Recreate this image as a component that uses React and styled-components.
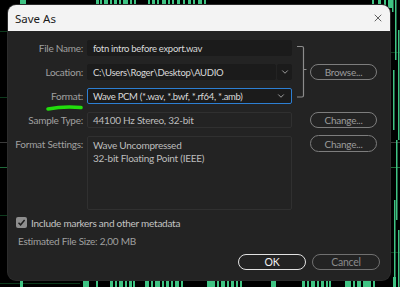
import React from 'react'
import styled, { createGlobalStyle } from 'styled-components'
import { ChevronDown, X } from 'lucide-react'

const GlobalStyle = createGlobalStyle`
  html, body { margin: 0; padding: 0; background: #000; }
  body { font-family: Lato, "Open Sans", sans-serif; }
`

const topBars = [
  [20, 6], [96, 3], [100, 2], [104, 4], [110, 2], [114, 3], [119, 2], [123, 5], [130, 2], [134, 2],
  [148, 2], [152, 3], [157, 2], [162, 4], [168, 2], [172, 2], [177, 3], [183, 2], [188, 3],
  [193, 2], [198, 4], [204, 2], [372, 2], [378, 3], [384, 2], [388, 4],
]

const bottomBars = [
  [20, 3], [83, 6], [96, 2], [110, 3], [115, 2], [119, 4], [125, 2], [129, 3], [133, 2],
  [145, 4], [151, 2], [155, 5], [162, 2], [166, 3], [171, 2], [175, 4], [181, 2],
  [207, 8], [217, 2], [221, 4], [227, 2], [231, 3], [236, 2], [240, 2],
  [271, 5], [302, 3], [307, 2], [311, 4], [317, 2], [321, 3], [326, 2], [329, 2],
  [345, 6], [353, 2], [357, 4], [363, 8], [373, 2], [393, 3],
]

const sideBars = [
  [392, 0, 12], [395, 0, 60], [398, 30, 110], [393, 70, 60], [396, 140, 80], [394, 200, 87], [398, 230, 57],
]

const gridLines = [
  [0, 8, 31, '#0d3b1d'], [0, 8, 97, '#0d3b1d'], [0, 8, 142, '#3a3a3a'], [0, 8, 167, '#1f6a3a'],
  [0, 8, 215, '#0d3b1d'], [0, 80, 283, '#0d3b1d'], [390, 400, 52, '#0d3b1d'], [390, 400, 142, '#3a3a3a'],
  [390, 400, 167, '#1f6a3a'], [390, 400, 252, '#0d3b1d'],
]

function Waveform() {
  return (
    <WaveSvg width="400" height="287" viewBox="0 0 400 287">
      {gridLines.map(([x1, x2, y, c], i) => (
        <line key={'g' + i} x1={x1} x2={x2} y1={y + 0.5} y2={y + 0.5} stroke={c} strokeWidth="1" />
      ))}
      {topBars.map(([x, w], i) => (
        <rect key={'t' + i} x={x} y="0" width={w} height="8" fill="#3fc383" />
      ))}
      {bottomBars.map(([x, w], i) => (
        <rect key={'b' + i} x={x} y="277" width={w} height="10" fill="#3fc383" />
      ))}
      {sideBars.map(([x, y, h], i) => (
        <rect key={'s' + i} x={x} y={y} width="1.5" height={h} fill="#3fc383" />
      ))}
    </WaveSvg>
  )
}

function App() {
  return (
    <Screen>
      <GlobalStyle />
      <Waveform />
      <Dialog>
        <TitleBar>
          <span>Save As</span>
          <CloseButton><X size={12} strokeWidth={1.4} /></CloseButton>
        </TitleBar>
        <Body>
          <Form>
            <Label>File Name:</Label>
            <Input>fotn intro before export.wav</Input>

            <Bracket>
              <svg width="18" height="64" viewBox="0 0 18 64">
                <path d="M5 6.5 H10 Q11.5 6.5 11.5 8 V55.5 Q11.5 57 10 57 H5 M11.5 29.5 H14.5" fill="none" stroke="#8c8c8c" strokeWidth="1.2" />
              </svg>
            </Bracket>

            <Label>Location:</Label>
            <Combo>
              <Input $grow>C:\Users\Roger\Desktop\AUDIO</Input>
              <DropButton><ChevronDown size={10} strokeWidth={1.8} /></DropButton>
            </Combo>
            <PillButton $row={2}>Browse...</PillButton>

            <Label>
              Format:
              <Underline width="40" height="8" viewBox="0 0 40 8">
                <path d="M3 5 Q18 2 36 3.5" fill="none" stroke="#22dd0c" strokeWidth="3.6" strokeLinecap="round" />
              </Underline>
            </Label>
            <Input $focus>
              <span>Wave PCM (*.wav, *.bwf, *.rf64, *.amb)</span>
              <ChevronDown size={10} strokeWidth={1.8} color="#c8c8c8" />
            </Input>

            <Label>Sample Type:</Label>
            <ReadOnly>44100 Hz Stereo, 32-bit</ReadOnly>
            <PillButton $row={4}>Change...</PillButton>

            <Label $top>Format Settings:</Label>
            <ReadOnly $multi>
              Wave Uncompressed
              <br />
              32-bit Floating Point (IEEE)
            </ReadOnly>
            <PillButton $row={5} $start>Change...</PillButton>
          </Form>

          <CheckRow>
            <CheckBox>
              <svg width="9" height="9" viewBox="0 0 9 9">
                <path d="M1.5 4.8 L3.6 6.8 L7.6 2" fill="none" stroke="#1e1e1e" strokeWidth="1.5" />
              </svg>
            </CheckBox>
            <CheckText>Include markers and other metadata</CheckText>
          </CheckRow>

          <SizeText>Estimated File Size: 2,00 MB</SizeText>

          <Footer>
            <FooterButton $primary>OK</FooterButton>
            <FooterButton>Cancel</FooterButton>
          </Footer>
        </Body>
      </Dialog>
    </Screen>
  )
}

export default App

const Screen = styled.div`
  position: relative;
  width: 400px;
  height: 287px;
  overflow: hidden;
  background: #000;
  padding: 5px 0 0 8px;
  box-sizing: border-box;
`

const WaveSvg = styled.svg`
  position: absolute;
  left: 0;
  top: 0;
`

const Dialog = styled.div`
  position: relative;
  width: 382px;
  height: 275px;
  border-radius: 8px;
  overflow: hidden;
  background: #232323;
  display: flex;
  flex-direction: column;
  box-shadow: 0 0 0 1px #2c2c2c;
`

const TitleBar = styled.div`
  height: 26px;
  flex: none;
  background: #f3f3f3;
  display: flex;
  align-items: center;
  justify-content: space-between;
  padding: 0 5px 0 7px;
  font-family: "Noto Sans", sans-serif;
  font-size: 11.5px;
  color: #1b1b1b;
`

const CloseButton = styled.div`
  width: 14px;
  height: 14px;
  display: flex;
  align-items: center;
  justify-content: center;
  color: #222;
`

const Body = styled.div`
  flex: 1;
  display: flex;
  flex-direction: column;
  padding-top: 9px;
  font-size: 10px;
  letter-spacing: -0.25px;
`

const Form = styled.div`
  display: grid;
  grid-template-columns: 79px 205px 18px 67px;
  grid-template-rows: 16px 16px 16px 16px 74px;
  row-gap: 8px;
`

const Label = styled.div`
  position: relative;
  grid-column: 1;
  padding-right: 4px;
  text-align: right;
  color: #a0a0a0;
  line-height: ${p => (p.$top ? '14px' : '16px')};
  padding-top: ${p => (p.$top ? '1px' : '0')};
  white-space: nowrap;
`

const Underline = styled.svg`
  position: absolute;
  left: 37px;
  top: 16px;
`

const Input = styled.div`
  ${p => (p.$grow ? 'flex: 1;' : 'grid-column: 2;')}
  box-sizing: border-box;
  height: 16px;
  display: flex;
  align-items: center;
  justify-content: space-between;
  padding: 0 5px 0 5px;
  background: #1b1b1b;
  border: 1px solid ${p => (p.$focus ? '#2d7fd3' : '#1b1b1b')};
  border-radius: 2px;
  color: #d9d9d9;
  font-size: 9.5px;
  letter-spacing: -0.3px;
  white-space: nowrap;
  overflow: hidden;
`

const Combo = styled.div`
  grid-column: 2;
  display: flex;
  gap: 1px;
`

const DropButton = styled.div`
  width: 15px;
  height: 16px;
  display: flex;
  align-items: center;
  justify-content: center;
  background: #1b1b1b;
  border-radius: 2px;
  color: #c8c8c8;
`

const Bracket = styled.div`
  grid-column: 3;
  grid-row: 1 / span 3;
`

const ReadOnly = styled.div`
  grid-column: 2;
  box-sizing: border-box;
  border: 1px solid #303030;
  border-radius: 2px;
  padding: ${p => (p.$multi ? '2px 5px' : '0 5px')};
  line-height: ${p => (p.$multi ? '13px' : '14px')};
  color: #bdbdbd;
  white-space: nowrap;
`

const PillButton = styled.div`
  grid-column: 4;
  grid-row: ${p => p.$row};
  align-self: ${p => (p.$start ? 'start' : 'stretch')};
  box-sizing: border-box;
  height: ${p => (p.$start ? '17px' : 'auto')};
  margin-top: ${p => (p.$start ? '-1px' : '0')};
  display: flex;
  align-items: center;
  justify-content: center;
  border: 1.5px solid #7d7d7d;
  border-radius: 9px;
  color: #9c9c9c;
`

const CheckRow = styled.div`
  display: flex;
  align-items: center;
  gap: 4px;
  margin-top: 7px;
  padding-left: 8px;
  height: 11px;
`

const CheckBox = styled.div`
  width: 11px;
  height: 11px;
  box-sizing: border-box;
  border-radius: 2px;
  background: #8e8e8e;
  display: flex;
  align-items: center;
  justify-content: center;
`

const CheckText = styled.span`
  color: #c4c4c4;
`

const SizeText = styled.div`
  margin-top: 7px;
  padding-left: 10px;
  line-height: 12px;
  color: #a0a0a0;
`

const Footer = styled.div`
  display: flex;
  justify-content: flex-end;
  gap: 6px;
  margin-top: 7px;
  padding-right: 10px;
`

const FooterButton = styled.div`
  width: 68px;
  height: 16px;
  box-sizing: border-box;
  display: flex;
  align-items: center;
  justify-content: center;
  border: 1.5px solid ${p => (p.$primary ? '#e2e2e2' : '#707070')};
  border-radius: 9px;
  color: ${p => (p.$primary ? '#f2f2f2' : '#8a8a8a')};
  font-size: 10.5px;
`
